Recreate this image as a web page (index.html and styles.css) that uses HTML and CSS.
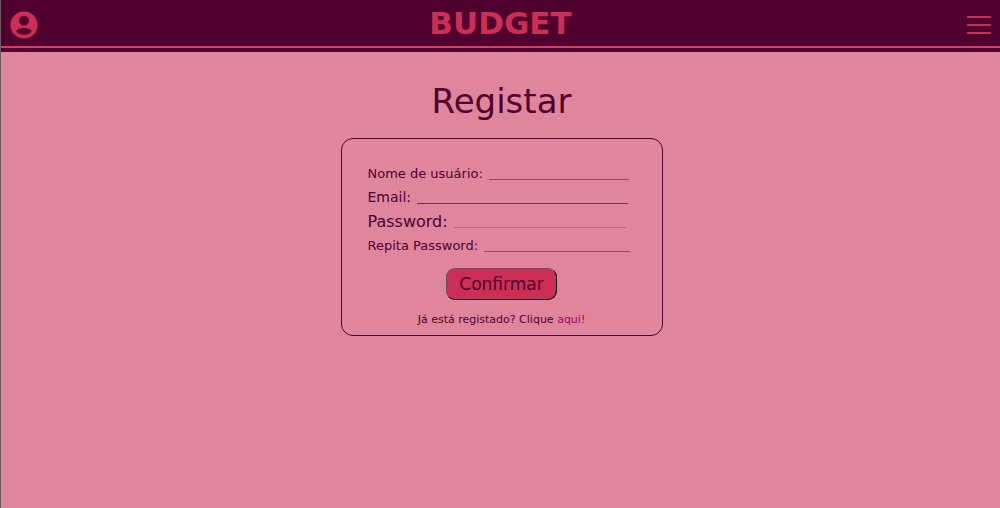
FILE: index.html
```html
<!DOCTYPE html>
<html lang="pt">
<head>
<meta charset="utf-8">
<meta name="viewport" content="width=device-width, initial-scale=1">
<title>Budget</title>
<link rel="stylesheet" href="styles.css">
</head>
<body>
<header class="topbar">
  <div class="topbar-row">
    <button class="icon-button" type="button" aria-label="Perfil">
      <svg class="profile-icon" viewBox="0 0 28 28" aria-hidden="true">
        <circle cx="14" cy="14" r="13.6" fill="currentColor"/>
        <circle class="profile-cutout" cx="14" cy="9.8" r="4.9"/>
        <path class="profile-cutout" d="M6.200 20.200C7.400 18.200 10.800 17 14 17s6.600 1.200 7.800 3.200C20.300 22.300 17.400 23.700 14 23.700s-6.300-1.400-7.800-3.500Z"/>
      </svg>
    </button>
    <div class="logo">BUDGET</div>
    <button class="icon-button" type="button" aria-label="Menu">
      <svg class="menu-icon" viewBox="0 0 24 18" aria-hidden="true">
        <path fill="none" stroke="currentColor" stroke-width="2" d="M0 1h24M0 9h24M0 17h24"/>
      </svg>
    </button>
  </div>
</header>
<main class="page">
  <h1 class="title">Registar</h1>
  <form class="card">
    <div class="fields">
      <div class="field small"><label for="user">Nome de usuário:</label><input class="line user" id="user" type="text"></div>
      <div class="field email-row"><label for="email">Email:</label><input class="line email" id="email" type="email"></div>
      <div class="field large"><label for="password">Password:</label><input class="line password" id="password" type="password"></div>
      <div class="field small"><label for="repeat">Repita Password:</label><input class="line repeat" id="repeat" type="password"></div>
    </div>
    <button class="confirm" type="button">Confirmar</button>
    <p class="note">Já está registado? Clique <a href="#">aqui!</a></p>
  </form>
</main>
</body>
</html>
```
FILE: styles.css
```css
* { box-sizing: border-box; }

body {
  margin: 0;
  min-height: 100vh;
  border-left: 1px solid #6b5a63;
  background: #e0869c;
  color: #4f002f;
  font-family: "DejaVu Sans", sans-serif;
}

.topbar {
  background: #4f002f;
  color: #cc2e55;
  padding-bottom: 4px;
}

.topbar-row {
  display: grid;
  grid-template-columns: 1fr auto 1fr;
  align-items: center;
  height: 48px;
  padding: 4px 9px 0;
  border-bottom: 2px solid #cc4562;
}

.icon-button {
  display: flex;
  padding: 0;
  border: 0;
  background: none;
  color: inherit;
  cursor: pointer;
}

.icon-button:last-child { justify-self: end; }
.profile-icon { width: 28px; height: 28px; }
.profile-cutout { fill: #4f002f; }
.menu-icon { width: 24px; height: 18px; }

.logo {
  padding-bottom: 4px;
  font-size: 31px;
  line-height: 36px;
  font-weight: 700;
}

.page {
  display: flex;
  flex-direction: column;
  align-items: center;
  padding: 28px 0 32px 2px;
}

.title {
  margin: 0 0 16px;
  font-size: 34px;
  line-height: 42px;
  font-weight: 400;
}

.card {
  display: flex;
  flex-direction: column;
  align-items: center;
  width: 322px;
  padding: 22px 26px 7px;
  border: 1px solid #4f002f;
  border-radius: 12px;
}

.fields { width: 100%; }

.field {
  display: flex;
  align-items: center;
  gap: 6px;
  height: 24px;
}

.small { font-size: 13px; }
.email-row { font-size: 14px; }
.large { font-size: 16px; }

.line {
  height: 14px;
  padding: 0;
  border: 0;
  border-bottom: 1px solid #96486a;
  background: transparent;
  color: inherit;
  font: inherit;
  outline: 0;
}

.user { width: 140px; }
.email { width: 211px; border-color: #703050; }
.password { width: 172px; border-color: #b56580; }
.repeat { width: 146px; }

.confirm {
  width: 111px;
  height: 32px;
  margin-top: 11px;
  padding: 0;
  border: 1px solid;
  border-color: #65545a #000 #000 #65545a;
  border-radius: 9px;
  background: #cc2e55;
  color: #4f002f;
  font: inherit;
  font-size: 17px;
}

.note {
  margin: 12px 0 0;
  font-size: 11px;
  line-height: 16px;
}

.note a {
  color: #a00060;
  text-decoration: none;
}
```
